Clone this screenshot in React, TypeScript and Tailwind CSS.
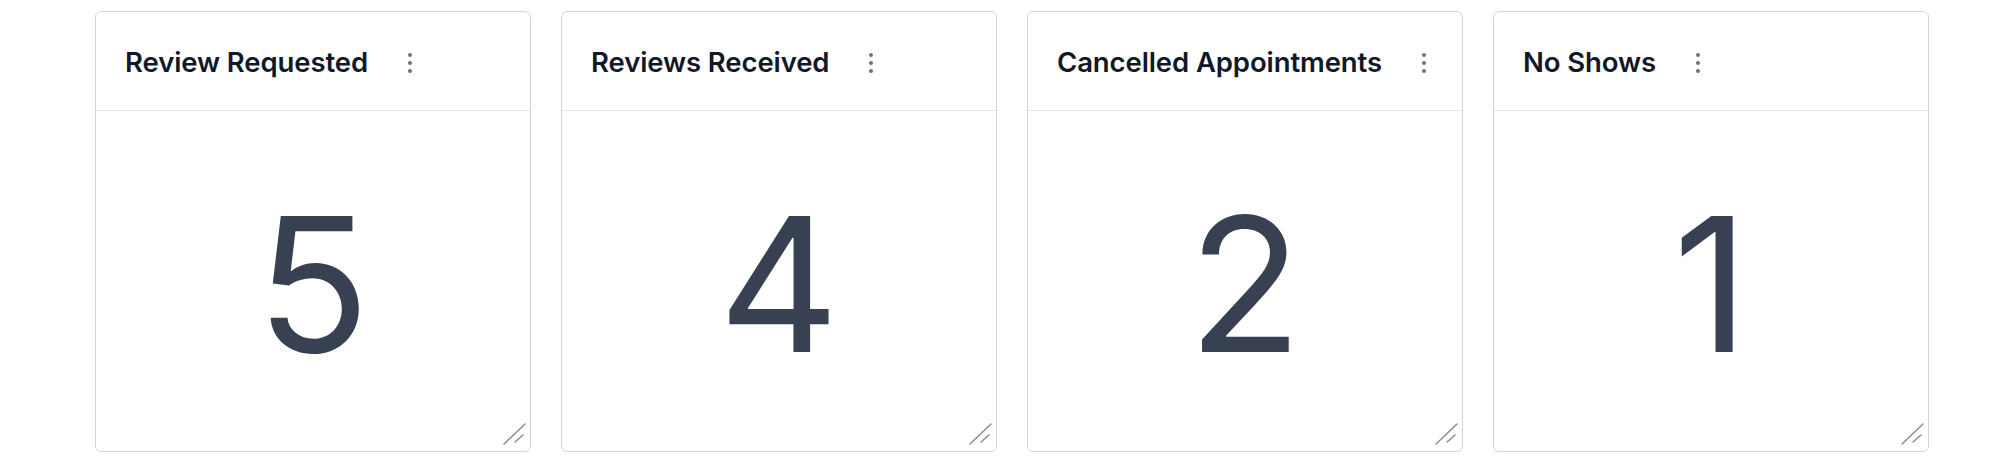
import React from "react";

const cards = [
  { title: "Review Requested", value: "5" },
  { title: "Reviews Received", value: "4" },
  { title: "Cancelled Appointments", value: "2" },
  { title: "No Shows", value: "1" },
];

function Dots() {
  return (
    <svg width="6" height="22" viewBox="0 0 6 22" className="shrink-0">
      <circle cx="3" cy="3" r="2" fill="#6b7280" />
      <circle cx="3" cy="11" r="2" fill="#6b7280" />
      <circle cx="3" cy="19" r="2" fill="#6b7280" />
    </svg>
  );
}

function Resize() {
  return (
    <svg
      width="30"
      height="30"
      viewBox="0 0 30 30"
      className="absolute right-0 bottom-0 pointer-events-none"
    >
      <line x1="4" y1="23" x2="25" y2="3" stroke="#8b8b96" strokeWidth="1.5" strokeLinecap="round" />
      <line x1="15" y1="21" x2="23" y2="14" stroke="#8b8b96" strokeWidth="1.5" strokeLinecap="round" />
    </svg>
  );
}

export default function App() {
  return (
    <div
      className="w-[2000px] h-[473px] bg-white pt-[11px] pl-[95px]"
      style={{ fontFamily: "Inter, 'Noto Sans', sans-serif" }}
    >
      <div className="flex gap-[30px]">
        {cards.map((c) => (
          <div
            key={c.title}
            className="relative w-[436px] h-[441px] border border-[#d1d5db] rounded-[6px] bg-white flex flex-col"
          >
            <div className="h-[99px] shrink-0 border-b border-[#e5e7eb] flex items-center pl-[29px] pt-[3px]">
              <span className="text-[27.5px] font-semibold text-[#111827] tracking-[-0.1px]">
                {c.title}
              </span>
              <span className="ml-[39px] flex items-center">
                <Dots />
              </span>
            </div>
            <div className="flex-1 flex items-center justify-center pt-[6px]">
              <span className="text-[187px] leading-none font-normal text-[#374151]">
                {c.value}
              </span>
            </div>
            <Resize />
          </div>
        ))}
      </div>
    </div>
  );
}
